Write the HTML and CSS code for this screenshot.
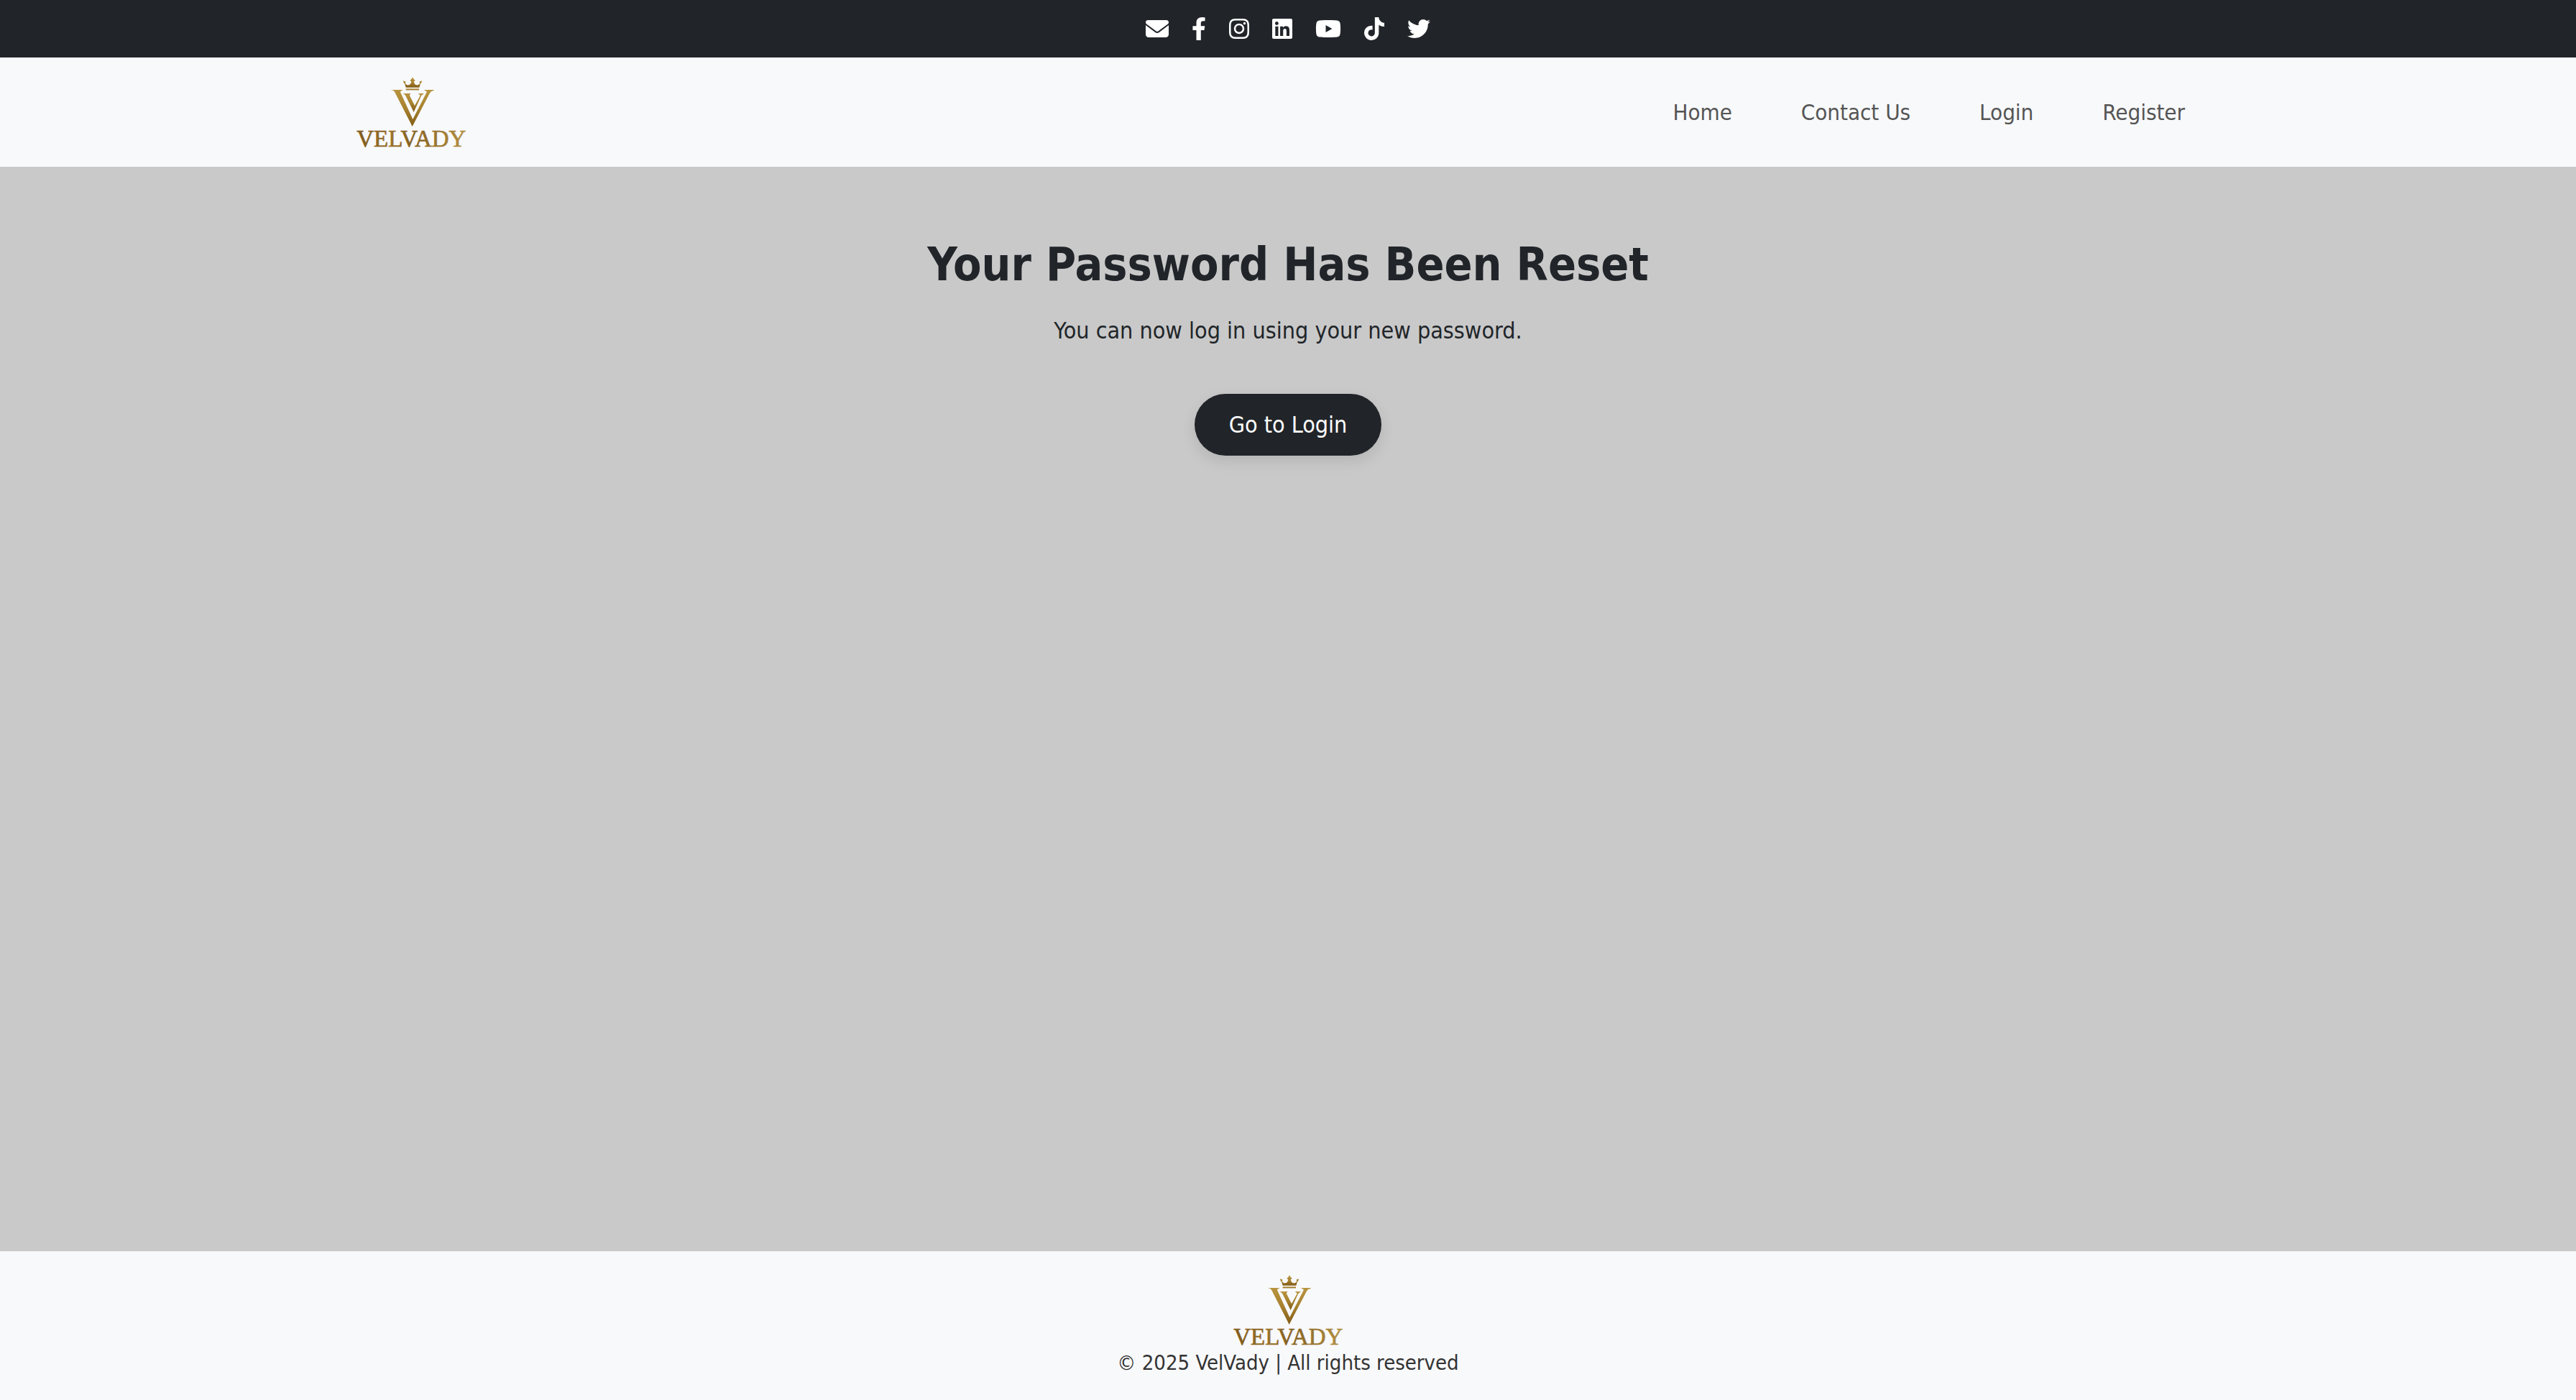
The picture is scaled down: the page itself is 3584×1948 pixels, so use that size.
FILE: index.html
```html
<!DOCTYPE html>
<html lang="en">
<head>
<meta charset="utf-8">
<meta name="viewport" content="width=device-width, initial-scale=1">
<title>VelVady</title>
<link rel="stylesheet" href="styles.css">
</head>
<body>
<svg class="defs" aria-hidden="true">
  <defs>
    <linearGradient id="gold" x1="0" y1="0" x2="0" y2="1">
      <stop offset="0" stop-color="#b8943f"/>
      <stop offset="0.5" stop-color="#a8822f"/>
      <stop offset="1" stop-color="#835c17"/>
    </linearGradient>
    <linearGradient id="gold-word" x1="0" y1="0" x2="1" y2="0">
      <stop offset="0" stop-color="#7f5a1c"/>
      <stop offset="0.35" stop-color="#9a732a"/>
      <stop offset="0.5" stop-color="#855f1f"/>
      <stop offset="1" stop-color="#b29040"/>
    </linearGradient>
    <symbol id="logo" viewBox="48 102 456 312">
      <g fill="url(#gold)">
        <path d="M243 127L254 131L251 137C255 143 260 146 265 145C271 144 275 139 277 131L271 125L277 121L282 112L287 121L293 125L287 131C289 139 293 144 299 145C304 146 309 143 313 137L310 131L321 127L319 136L315 139L310 155H254L249 139L245 136Z"/>
        <path d="M254 160h55v6h-55z"/>
        <path d="M191 165h48v3c-9 1-9 5-5 13l49 107 55-107c5-9 4-12-6-13v-3h39v3c-9 1-14 5-19 14l-71 136-72-141c-4-8-9-11-18-12z"/>
        <path d="M244 180h30v3c-5 1-5 4-3 8l20 40 20-37c4-7 3-10-4-11v-3h21v3c-5 1-8 4-11 10l-30 65-33-66c-3-6-5-8-10-9z"/>
      </g>
      <text class="wordmark" x="277" y="403" text-anchor="middle" fill="url(#gold-word)" stroke="url(#gold-word)">VELVADY</text>
    </symbol>
  </defs>
</svg>

<div class="topbar">
  <a href="#" aria-label="Email"><svg class="icon" viewBox="0 0 512 512"><path d="M48 64C21.500 64 0 85.500 0 112c0 15.100 7.100 29.300 19.200 38.400L236.800 313.600c11.400 8.500 27 8.500 38.400 0L492.800 150.400c12.100-9.100 19.200-23.300 19.200-38.400c0-26.500-21.500-48-48-48H48zM0 176V384c0 35.300 28.700 64 64 64H448c35.300 0 64-28.700 64-64V176L294.400 339.200c-22.800 17.100-54 17.100-76.800 0L0 176z"/></svg></a>
  <a href="#" aria-label="Facebook"><svg class="icon" viewBox="0 0 320 512"><path d="M279.140 288l14.220-92.660h-88.910v-60.130c0-25.350 12.420-50.060 52.240-50.060h40.420V6.260S260.430 0 225.360 0c-73.220 0-121.080 44.380-121.080 124.720v70.620H22.890V288h81.390v224h100.170V288z"/></svg></a>
  <a href="#" aria-label="Instagram"><svg class="icon" viewBox="0 0 448 512"><path d="M224.100 141c-63.600 0-114.900 51.300-114.900 114.900s51.300 114.900 114.900 114.900S339 319.500 339 255.900 287.700 141 224.100 141zm0 189.600c-41.100 0-74.700-33.500-74.700-74.700s33.500-74.700 74.700-74.700 74.700 33.500 74.700 74.700-33.600 74.700-74.700 74.700zm146.400-194.300c0 14.900-12 26.800-26.800 26.800-14.900 0-26.800-12-26.800-26.800s12-26.800 26.800-26.800 26.800 12 26.800 26.800zm76.100 27.200c-1.700-35.900-9.900-67.700-36.200-93.900-26.200-26.200-58-34.400-93.900-36.200-37-2.100-147.900-2.100-184.900 0-35.800 1.700-67.600 9.900-93.900 36.100s-34.400 58-36.200 93.900c-2.100 37-2.100 147.900 0 184.900 1.700 35.900 9.900 67.700 36.200 93.900s58 34.400 93.900 36.200c37 2.100 147.900 2.100 184.900 0 35.900-1.700 67.700-9.900 93.900-36.200 26.200-26.200 34.400-58 36.200-93.900 2.100-37 2.100-147.800 0-184.800zM398.800 388c-7.800 19.600-22.900 34.700-42.600 42.600-29.500 11.700-99.500 9-132.100 9s-102.700 2.600-132.100-9c-19.600-7.800-34.700-22.900-42.600-42.600-11.700-29.500-9-99.500-9-132.100s-2.600-102.700 9-132.100c7.800-19.600 22.900-34.700 42.600-42.600 29.500-11.700 99.500-9 132.100-9s102.700-2.600 132.100 9c19.600 7.800 34.700 22.900 42.600 42.600 11.700 29.500 9 99.500 9 132.100s2.700 102.700-9 132.100z"/></svg></a>
  <a href="#" aria-label="LinkedIn"><svg class="icon" viewBox="0 0 448 512"><path d="M416 32H31.900C14.300 32 0 46.500 0 64.300v383.400C0 465.500 14.300 480 31.900 480H416c17.600 0 32-14.500 32-32.300V64.300c0-17.800-14.400-32.300-32-32.300zM135.400 416H69V202.200h66.500V416zm-33.200-243c-21.300 0-38.500-17.300-38.500-38.500S80.900 96 102.200 96c21.200 0 38.500 17.300 38.500 38.500 0 21.300-17.200 38.500-38.500 38.500zm282.100 243h-66.400V312c0-24.800-.5-56.700-34.500-56.700-34.600 0-39.900 27-39.900 54.900V416h-66.400V202.200h63.700v29.200h.9c8.900-16.800 30.600-34.500 62.900-34.500 67.200 0 79.700 44.300 79.700 101.900V416z"/></svg></a>
  <a href="#" aria-label="YouTube"><svg class="icon" viewBox="0 0 576 512"><path d="M549.655 124.083c-6.281-23.650-24.787-42.276-48.284-48.597C458.781 64 288 64 288 64S117.220 64 74.629 75.486c-23.497 6.322-42.003 24.947-48.284 48.597-11.412 42.867-11.412 132.305-11.412 132.305s0 89.438 11.412 132.305c6.281 23.650 24.787 41.500 48.284 47.821C117.220 448 288 448 288 448s170.780 0 213.371-11.486c23.497-6.321 42.003-24.171 48.284-47.821 11.412-42.867 11.412-132.305 11.412-132.305s0-89.438-11.412-132.305zm-317.510 213.508V175.185l142.739 81.205-142.739 81.201z"/></svg></a>
  <a href="#" aria-label="TikTok"><svg class="icon" viewBox="0 0 448 512"><path d="M448 209.910a210.060 210.060 0 0 1-122.770-39.250V349.380A162.550 162.550 0 1 1 185 188.310V278.200a74.620 74.620 0 1 0 52.230 71.180V0l88 0a121.180 121.180 0 0 0 1.860 22.170h0A122.180 122.180 0 0 0 381 102.390a121.430 121.430 0 0 0 67 20.140z"/></svg></a>
  <a href="#" aria-label="Twitter"><svg class="icon" viewBox="0 0 512 512"><path d="M459.370 151.716c.325 4.548.325 9.097.325 13.645 0 138.720-105.583 298.558-298.558 298.558-59.452 0-114.680-17.219-161.137-47.106 8.447.974 16.568 1.299 25.340 1.299 49.055 0 94.213-16.568 130.274-44.832-46.132-.975-84.792-31.188-98.112-72.772 6.498.974 12.995 1.624 19.818 1.624 9.421 0 18.843-1.300 27.614-3.573-48.081-9.747-84.143-51.980-84.143-102.985v-1.299c13.969 7.797 30.214 12.670 47.431 13.319-28.264-18.843-46.781-51.005-46.781-87.391 0-19.492 5.197-37.360 14.294-52.954 51.655 63.675 129.300 105.258 216.365 109.807-1.624-7.797-2.599-15.918-2.599-24.040 0-57.828 46.782-104.934 104.934-104.934 30.213 0 57.502 12.670 76.670 33.137 23.715-4.548 46.456-13.320 66.599-25.340-7.798 24.366-24.366 44.833-46.132 57.827 21.117-2.273 41.584-8.122 60.426-16.243-14.292 20.791-32.161 39.308-52.628 54.253z"/></svg></a>
</div>

<header class="header">
  <div class="container">
    <a href="#" aria-label="VelVady home"><svg class="logo"><use href="#logo"/></svg></a>
    <nav class="nav">
      <a href="#">Home</a>
      <a href="#">Contact Us</a>
      <a href="#">Login</a>
      <a href="#">Register</a>
    </nav>
  </div>
</header>

<main class="main">
  <h1>Your Password Has Been Reset</h1>
  <p>You can now log in using your new password.</p>
  <a class="button" href="#">Go to Login</a>
</main>

<footer class="footer">
  <svg class="logo"><use href="#logo"/></svg>
  <p>© 2025 VelVady | All rights reserved</p>
</footer>
</body>
</html>
```
FILE: styles.css
```css
* {
  box-sizing: border-box;
}

body {
  margin: 0;
  min-height: 100vh;
  display: flex;
  flex-direction: column;
  background: #c9c9c9;
  color: #212529;
  font-family: Tahoma, "DejaVu Sans Condensed", "DejaVu Sans", sans-serif;
  font-size: 32px;
  line-height: 48px;
}

a {
  text-decoration: none;
}

h1,
p {
  margin: 0;
}

.defs {
  position: absolute;
  width: 0;
  height: 0;
}

.topbar {
  display: flex;
  flex-wrap: wrap;
  justify-content: center;
  gap: 32px;
  padding: 24px;
  background: #212529;
}

.topbar a {
  display: flex;
  color: #fff;
}

.icon {
  height: 32px;
  fill: currentColor;
}

.header {
  background: #f8f9fb;
}

.container {
  display: flex;
  flex-wrap: wrap;
  align-items: center;
  justify-content: space-between;
  max-width: 2640px;
  margin: 0 auto;
  padding: 24px;
}

.container > a {
  display: flex;
}

.logo {
  width: 152px;
  height: 104px;
}

.wordmark {
  font-family: "Liberation Serif", serif;
  font-size: 99px;
  stroke-width: 2px;
}

.nav {
  display: flex;
  flex-wrap: wrap;
  font-size: 31px;
}

.nav a {
  padding: 0 48px;
  color: #555;
}

.main {
  flex: 1;
  display: flex;
  flex-direction: column;
  align-items: center;
  padding: 96px 24px;
  text-align: center;
}

h1 {
  margin-bottom: 28px;
  font-size: 64px;
  line-height: 80px;
}

.button {
  margin-top: 64px;
  padding: 24px 48px;
  border-radius: 50px;
  background: #212529;
  box-shadow: 0 8px 20px rgba(0, 0, 0, 0.1);
  color: #fff;
  line-height: 38px;
}

.footer {
  display: flex;
  flex-direction: column;
  align-items: center;
  padding: 30px 24px;
  background: #f8f9fb;
  color: #333;
  font-size: 29px;
  line-height: 43px;
  text-align: center;
}
```
